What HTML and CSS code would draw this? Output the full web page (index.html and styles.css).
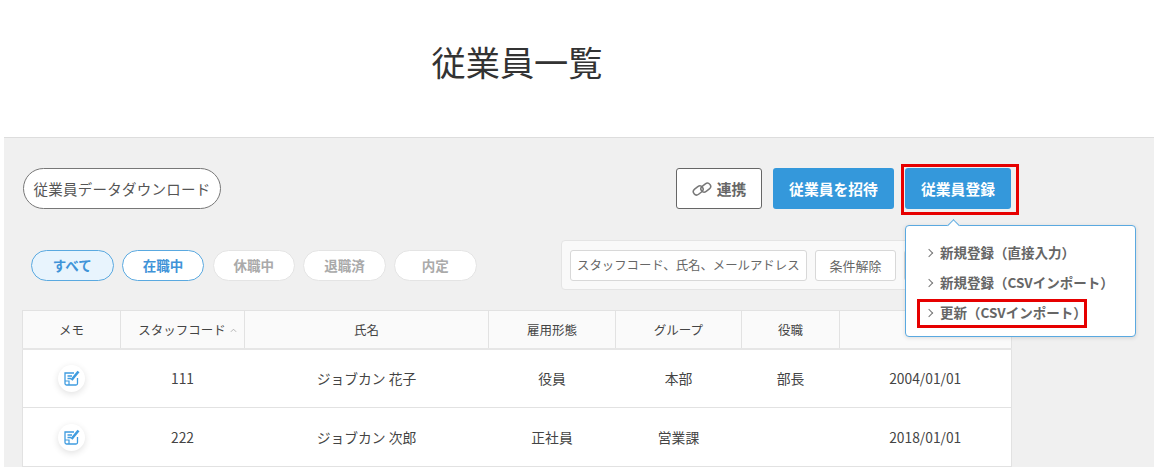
FILE: index.html
```html
<!DOCTYPE html>
<html lang="ja">
<head>
<meta charset="utf-8">
<title>従業員一覧</title>
<link rel="stylesheet" href="styles.css">
</head>
<body>
<header class="page-head"><h1 class="page-title">従業員一覧</h1></header>
<main class="panel">
  <div class="toolbar">
    <button class="btn-download">従業員データダウンロード</button>
    <div class="actions">
      <button class="btn btn-outline">
        <svg class="link-icon" viewBox="0 0 20 14" width="20" height="14" fill="none" stroke="#777" stroke-width="1.5"><rect x="1" y="5.2" width="10.5" height="6.5" rx="3.2" transform="rotate(-38 6.2 8.5)"/><rect x="8.5" y="2.4" width="10.5" height="6.5" rx="3.2" transform="rotate(-38 13.7 5.6)"/></svg>
        連携
      </button>
      <button class="btn btn-primary btn-invite">従業員を招待</button>
      <div class="register">
        <button class="btn btn-primary btn-register">従業員登録</button>
        <div class="menu">
          <span class="menu-caret"></span>
          <ul class="menu-list">
            <li class="menu-item">新規登録（直接入力）</li>
            <li class="menu-item">新規登録（CSVインポート）</li>
            <li class="menu-item menu-item-marked">更新（CSVインポート）</li>
          </ul>
        </div>
      </div>
    </div>
  </div>
  <div class="filters">
    <div class="pills">
      <span class="pill pill-all">すべて</span>
      <span class="pill pill-active">在職中</span>
      <span class="pill">休職中</span>
      <span class="pill">退職済</span>
      <span class="pill">内定</span>
    </div>
    <div class="search">
      <input class="search-input" type="text" placeholder="スタッフコード、氏名、メールアドレス">
      <button class="search-btn">条件解除</button>
      <button class="search-btn search-btn-go"></button>
    </div>
  </div>
  <table class="staff">
    <colgroup>
      <col class="c-memo"><col class="c-code"><col class="c-name"><col class="c-type"><col class="c-group"><col class="c-role"><col class="c-date">
    </colgroup>
    <thead>
      <tr>
        <th>メモ</th>
        <th class="th-code">スタッフコード <svg class="sort" viewBox="0 0 8 5" width="7" height="5" fill="none" stroke="#aaa" stroke-width="1"><path d="M1 4 L4 1 L7 4"/></svg></th>
        <th>氏名</th><th>雇用形態</th><th>グループ</th><th>役職</th><th></th>
      </tr>
    </thead>
    <tbody>
      <tr>
        <td><span class="memo"><svg viewBox="0 0 16 16" width="16" height="16" fill="none" stroke="#3f9ce0" stroke-width="1.3"><path d="M10 3 H1 V13.5 Q1 15 2.5 15 H12 Q13.5 15 13.5 13.5 V8"/><path d="M3.5 6 H8 M3.5 8.5 H7"/><path d="M1 11 H5 V15" stroke-width="1.2"/><path d="M7.5 10 L14.5 1.5" stroke-width="2.6"/></svg></span></td>
        <td>111</td><td>ジョブカン 花子</td><td>役員</td><td>本部</td><td>部長</td><td>2004/01/01</td>
      </tr>
      <tr>
        <td><span class="memo"><svg viewBox="0 0 16 16" width="16" height="16" fill="none" stroke="#3f9ce0" stroke-width="1.3"><path d="M10 3 H1 V13.5 Q1 15 2.5 15 H12 Q13.5 15 13.5 13.5 V8"/><path d="M3.5 6 H8 M3.5 8.5 H7"/><path d="M1 11 H5 V15" stroke-width="1.2"/><path d="M7.5 10 L14.5 1.5" stroke-width="2.6"/></svg></span></td>
        <td>222</td><td>ジョブカン 次郎</td><td>正社員</td><td>営業課</td><td></td><td>2018/01/01</td>
      </tr>
    </tbody>
  </table>
</main>
</body>
</html>
```
FILE: styles.css
```css
*, *::before, *::after { box-sizing: border-box; }
html, body { margin: 0; height: 467px; overflow: hidden; background: #fff; }
body {
  padding: 0 2px 0 4px;
  font-family: "Noto Sans CJK JP", "Noto Sans", sans-serif;
  color: #444;
}
button, input { font-family: inherit; }
.page-head { width: 1026px; height: 137px; display: flex; justify-content: center; padding-top: 36px; }
.page-title { margin: 0; font-size: 34.2px; line-height: 50px; font-weight: 400; color: #333; }
.panel { height: 330px; background: #f0f0f0; border-top: 1px solid #ddd; padding: 30px 0 0 18px; }
.toolbar { width: 989px; height: 41px; display: flex; justify-content: space-between; padding-left: 1px; }
.btn-download {
  width: 198px; height: 41px; padding: 0;
  background: #fff; border: 1px solid #777; border-radius: 21px;
  font-size: 14.5px; letter-spacing: 0.25px; color: #555;
}
.actions { display: flex; gap: 11px; }
.btn { height: 41px; border-radius: 3px; font-size: 14.8px; font-weight: 700; padding: 0; }
.btn-outline {
  width: 86px; background: #fff; border: 1px solid #666; color: #666;
  display: flex; align-items: center; justify-content: center; gap: 5px;
}
.link-icon { display: block; }
.btn-primary { background: #3498db; border: 0; color: #fff; }
.btn-invite { width: 121px; }
.register { position: relative; }
.btn-register { width: 106px; position: relative; }
.btn-register::before {
  content: ""; position: absolute; left: -4px; top: -4px; width: 118px; height: 51px;
  border: 3px solid #e60000; pointer-events: none;
}
.menu {
  position: absolute; left: 0; top: 57px; width: 231px; height: 112px;
  background: #fff; border: 1px solid #5aa9e0; border-radius: 4px;
  box-shadow: 0 1px 4px rgba(0,0,0,.12); z-index: 5;
}
.menu-caret {
  position: absolute; left: 43px; top: -5px; width: 9px; height: 9px;
  background: #fff; border-left: 1px solid #5aa9e0; border-top: 1px solid #5aa9e0;
  transform: rotate(45deg);
}
.menu-list { list-style: none; margin: 0; padding: 12px 0 0 11px; }
.menu-item {
  position: relative; height: 30px; line-height: 29px; padding-left: 23px;
  font-size: 13.5px; font-weight: 700; color: #666; white-space: nowrap;
}
.menu-item::before {
  content: ""; position: absolute; left: 9px; top: 12px; width: 6px; height: 6px;
  border-right: 1px solid #777; border-top: 1px solid #777; transform: rotate(45deg);
}
.menu-item-marked::after {
  content: ""; position: absolute; left: 0; top: 1px; width: 170px; height: 29px;
  border: 3px solid #e60000;
}
.filters { width: 989px; margin-top: 31px; height: 50px; display: flex; justify-content: space-between; align-items: center; padding-left: 9px; }
.pills { display: flex; gap: 8.25px; }
.pill {
  width: 82.5px; height: 31px; line-height: 29px; text-align: center;
  background: #fff; border: 1px solid #e4e4e4; border-radius: 16px;
  font-size: 13.5px; font-weight: 700; color: #aaa;
}
.pill-all { background: #e8f4fd; border-color: #5aa9e0; color: #3f93d8; }
.pill-active { border-color: #5aa9e0; color: #3f93d8; }
.search {
  width: 450px; height: 50px; display: flex; align-items: center; gap: 8px;
  background: #f9f9f9; border: 1px solid #e4e4e4; border-radius: 4px; padding: 0 8px;
}
.search-input {
  width: 237px; height: 31px; padding: 0 6px; background: #fff;
  border: 1px solid #d8d8d8; border-radius: 3px; font-size: 12.4px; color: #666;
}
.search-input::placeholder { color: #666; opacity: 1; }
.search-btn {
  width: 81px; height: 31px; padding: 0; background: #fff;
  border: 1px solid #d8d8d8; border-radius: 3px; font-size: 13px; color: #666;
}
.search-btn-go { width: 60px; }
.staff { width: 989px; margin: 20px 0 0; table-layout: fixed; border-collapse: collapse; background: #fff; border: 1px solid #e2e2e2; }
.c-memo { width: 98px; } .c-code { width: 124px; } .c-name { width: 244px; }
.c-type { width: 127px; } .c-group { width: 126px; } .c-role { width: 98px; } .c-date { width: 172px; }
.staff th {
  height: 38px; padding: 0; background: #fafafa; font-size: 12.5px; font-weight: 400; color: #444;
  border-right: 1px solid #e2e2e2; border-bottom: 2px solid #e6e6e6;
}
.staff th:last-child { border-right: 0; }
.staff .th-code { padding-left: 10px; }
.sort { margin-left: 1px; vertical-align: 2px; }
.staff td { height: 59px; padding: 0; text-align: center; font-size: 13.8px; color: #444; border-bottom: 1px solid #e2e2e2; }
.memo {
  display: inline-flex; align-items: center; justify-content: center; width: 27px; height: 27px;
  border-radius: 50%; background: #fff; box-shadow: 0 2px 7px rgba(0,0,0,.12); vertical-align: middle;
}
```
